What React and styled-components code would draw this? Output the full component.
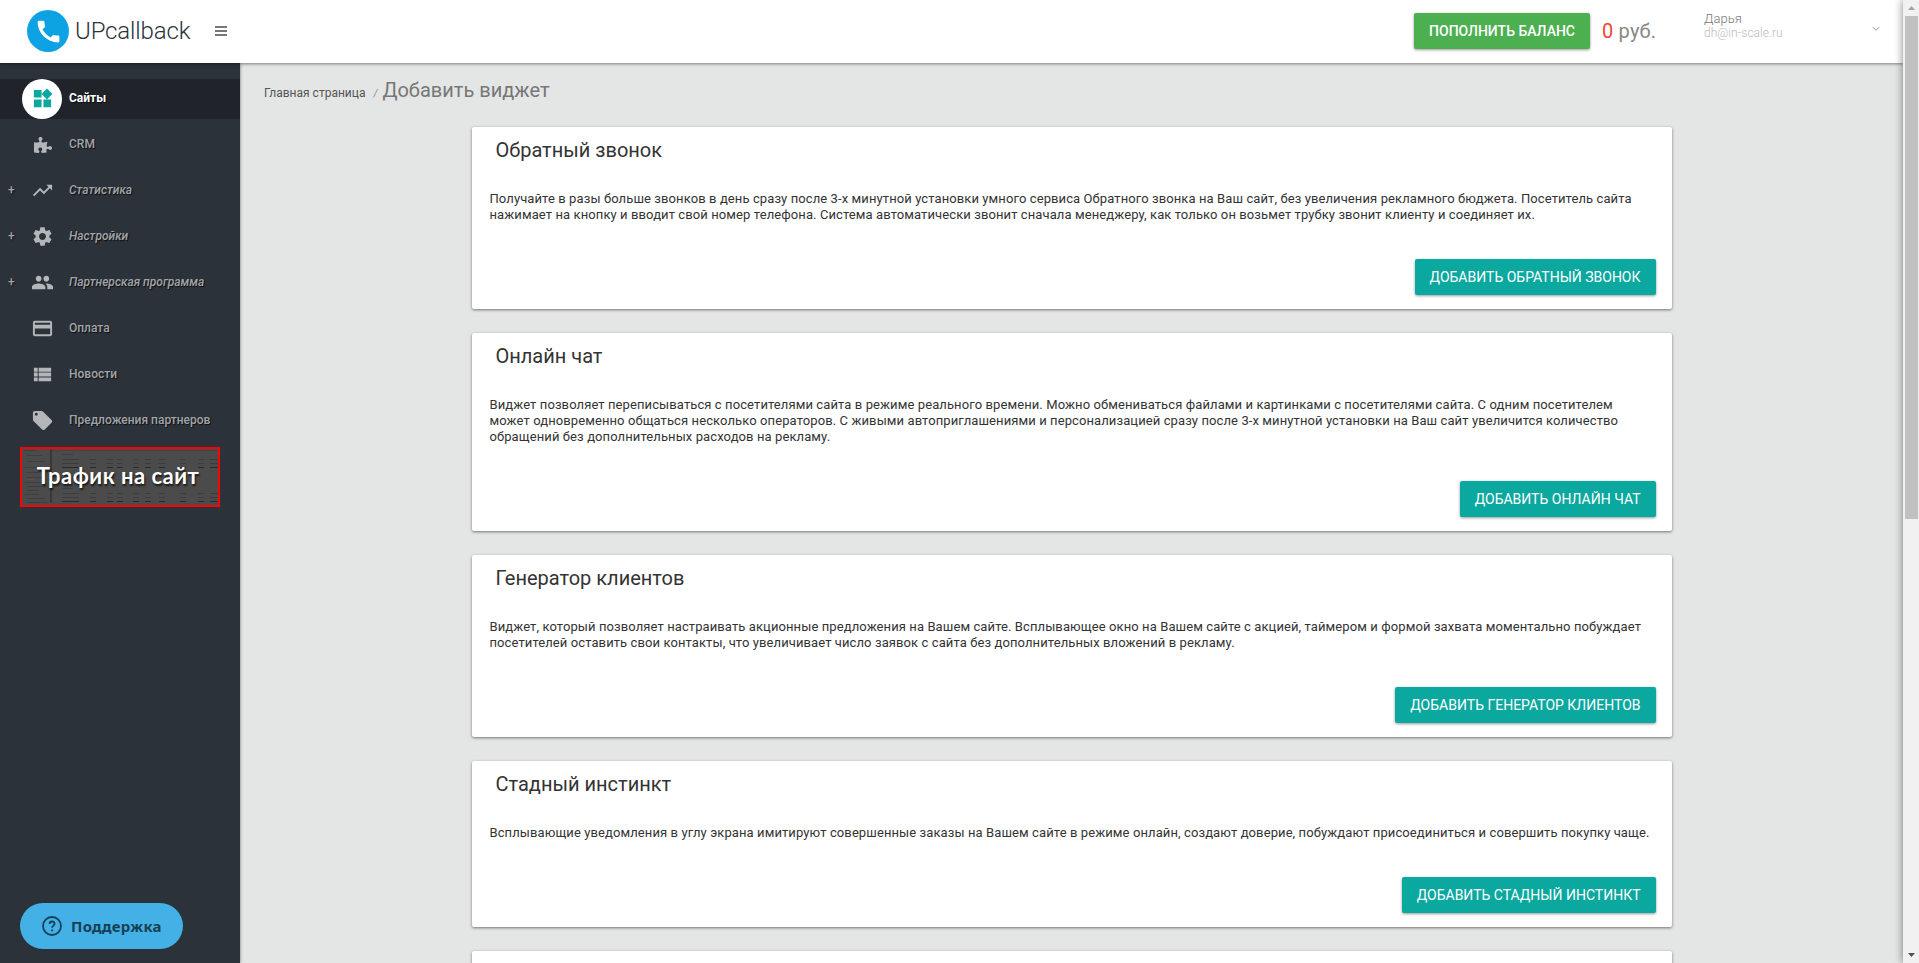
import React from 'react'
import styled, { createGlobalStyle, css } from 'styled-components'
import { FaPuzzlePiece } from 'react-icons/fa'
import {
  MdCall,
  MdLocalOffer,
  MdPayment,
  MdPeople,
  MdSettings,
  MdTrendingUp,
  MdViewList,
  MdWidgets,
} from 'react-icons/md'

const GlobalStyle = createGlobalStyle`
  * {
    box-sizing: border-box;
  }

  body {
    margin: 0;
    overflow: hidden;
    font-family: Roboto, 'Noto Sans', sans-serif;
    font-size: 13px;
    color: #333;
  }
`

const Window = styled.div`
  display: flex;
  height: 100vh;
  overflow: hidden;
  background: #e4e6e5;
`

const Page = styled.div`
  flex: 1;
  min-width: 0;
  display: flex;
  flex-direction: column;
`

const Header = styled.header`
  flex: none;
  z-index: 1;
  display: flex;
  height: 63px;
  padding-left: 27px;
  background: #fff;
  box-shadow: 0 1px 3px rgba(0, 0, 0, 0.45);
`

const Logo = styled.div`
  display: flex;
  align-items: center;
  width: 188px;
  color: #2b323a;
  font-size: 24px;
  font-weight: 330;
  letter-spacing: -0.15px;
  white-space: nowrap;

  span:last-child {
    margin-top: -2px;
  }
`

const LogoMark = styled.span`
  display: flex;
  align-items: center;
  justify-content: center;
  width: 42px;
  height: 42px;
  margin: -1px 6px 0 0;
  border-radius: 50%;
  background: #0da2e4;
  color: #fff;
`

const Burger = styled.div`
  display: flex;
  flex-direction: column;
  gap: 2px;
  margin-top: 26px;

  span {
    width: 12px;
    height: 2px;
    background: #777;
  }
`

const Account = styled.div`
  display: flex;
  margin-left: auto;
  padding-top: 13px;
`

const Button = styled.button`
  height: 36px;
  padding: 0 15px;
  border: 0;
  border-radius: 2px;
  background: ${({ $green }) => ($green ? '#4caf50' : '#0ba8a0')};
  box-shadow: 0 1px 3px rgba(0, 0, 0, 0.4);
  color: #fff;
  font-family: inherit;
  font-size: 14px;
  font-weight: ${({ $green }) => ($green ? 500 : 450)};
  text-transform: uppercase;
  white-space: nowrap;
`

const Balance = styled.div`
  width: 102px;
  margin-left: 12px;
  color: #888;
  font-size: 20px;
  line-height: 36px;
  letter-spacing: 0.2px;

  b {
    color: #f44336;
    font-weight: 400;
  }
`

const User = styled.div`
  width: 168px;
  margin-top: -1px;
  color: #bbb;
  font-size: 12px;
  font-weight: 300;
  line-height: 14px;
  letter-spacing: 0.05px;

  strong {
    display: block;
    color: #777;
    font-size: 13px;
    font-weight: 350;
  }
`

const Chevron = styled.svg`
  width: 8px;
  height: 6px;
  margin: 13px 23px 0 0;
`

const Body = styled.div`
  flex: 1;
  display: flex;
  min-height: 0;
`

const Sidebar = styled.aside`
  flex: none;
  display: flex;
  flex-direction: column;
  width: 240px;
  padding-top: 16px;
  background: #2b323a;
  box-shadow: 0 0 3px rgba(0, 0, 0, 0.5);
`

const Menu = styled.nav`
  display: flex;
  flex-direction: column;
  gap: 6px;
`

const MenuIcon = styled.span`
  display: flex;
  align-items: center;
  justify-content: center;
  width: 40px;
  height: 40px;
  margin-right: 7px;
  padding: 0 0 1px 1px;
  border-radius: 50%;
  font-size: ${({ $size }) => $size || 23}px;
`

const MenuItem = styled.a`
  display: flex;
  align-items: center;
  height: 40px;
  color: #a1a4a7;
  font-size: 12px;
  font-weight: 500;
  font-style: ${({ $nested }) => ($nested ? 'italic' : 'normal')};
  text-shadow: 1px 1px 1px rgba(0, 0, 0, 0.7);
  white-space: nowrap;

  ${MenuIcon} {
    color: #b4b7ba;
  }

  ${({ $active }) =>
    $active &&
    css`
      background: #20242a;
      color: #fff;
      font-weight: 700;

      ${MenuIcon} {
        background: #fff;
        color: #0ba8a0;
      }
    `}
`

const Plus = styled.span`
  width: 22px;
  margin-top: -2px;
  padding-left: 8px;
  font-style: normal;
`

const Label = styled.span`
  margin-top: -2px;
`

const Banner = styled.a`
  position: relative;
  display: flex;
  align-items: center;
  justify-content: center;
  width: 200px;
  height: 60px;
  margin: 6px 0 0 20px;
  border: 2px solid #f00;
  background: #4b4b4b;
  color: #fff;
  font-family: Lato, 'Open Sans', sans-serif;
  font-size: 22px;
  font-weight: 700;
  letter-spacing: 0.5px;
  text-shadow: 1px 2px 2px rgba(0, 0, 0, 0.7);
  white-space: nowrap;

  svg {
    position: absolute;
    inset: 0;
  }

  span {
    position: relative;
    top: -2px;
    left: -2px;
  }
`

const Support = styled.button`
  display: flex;
  align-items: center;
  width: 163px;
  height: 46px;
  margin: auto 0 14px 20px;
  padding: 0 0 0 22px;
  border: 0;
  border-radius: 23px;
  background: #43b1e6;
  color: #173f55;
  font-family: 'Noto Sans', 'Open Sans', sans-serif;
  font-size: 15px;
  font-weight: 700;
  letter-spacing: 0.2px;

  svg {
    margin-right: 9px;
  }
`

const Main = styled.main`
  flex: 1;
  min-width: 0;
  overflow: hidden;
`

const Breadcrumbs = styled.div`
  display: flex;
  align-items: baseline;
  height: 64px;
  padding: 15px 0 0 24px;
  color: #555;
  font-size: 12px;

  i {
    margin: 0 5px 0 8px;
    color: #888;
    font-size: 10px;
  }

  h1 {
    margin: 0;
    color: #777;
    font-size: 20px;
    font-weight: 400;
  }
`

const Cards = styled.div`
  display: flex;
  flex-direction: column;
  gap: 24px;
  width: 1200px;
  margin: 0 auto;
`

const Card = styled.section`
  display: flex;
  flex-direction: column;
  align-items: flex-end;
  padding: 11px 16px 14px 18px;
  border-radius: 2px;
  background: #fff;
  box-shadow: 0 1px 3px rgba(0, 0, 0, 0.5);
`

const CardTitle = styled.h2`
  align-self: stretch;
  margin: 0 0 29px 6px;
  color: #333;
  font-size: 20px;
  font-weight: 400;
  line-height: 24px;
`

const CardText = styled.p`
  align-self: stretch;
  min-height: 16px;
  margin: 0 2px 36px 0;
  font-size: 13px;
  line-height: 16px;
  letter-spacing: 0.1px;
`

const ScrollBar = styled.div`
  flex: none;
  z-index: 2;
  display: flex;
  flex-direction: column;
  width: 16px;
  padding: 6px 1px 6px 2px;
  background: #f1f1f1;
  box-shadow: 0 0 8px rgba(0, 0, 0, 0.5);

  svg {
    display: block;
    margin: 0 auto;
  }
`

const Thumb = styled.div`
  height: 503px;
  margin: 6px 0 auto;
  background: #c1c1c1;
`

const menu = [
  { label: 'Сайты', icon: MdWidgets, active: true },
  { label: 'CRM', icon: FaPuzzlePiece, size: 18 },
  { label: 'Статистика', icon: MdTrendingUp, nested: true },
  { label: 'Настройки', icon: MdSettings, nested: true },
  { label: 'Партнерская программа', icon: MdPeople, nested: true },
  { label: 'Оплата', icon: MdPayment },
  { label: 'Новости', icon: MdViewList },
  { label: 'Предложения партнеров', icon: MdLocalOffer },
]

const widgets = [
  {
    title: 'Обратный звонок',
    text: 'Получайте в разы больше звонков в день сразу после 3-х минутной установки умного сервиса Обратного звонка на Ваш сайт, без увеличения рекламного бюджета. Посетитель сайта нажимает на кнопку и вводит свой номер телефона. Система автоматически звонит сначала менеджеру, как только он возьмет трубку звонит клиенту и соединяет их.',
    action: 'Добавить обратный звонок',
  },
  {
    title: 'Онлайн чат',
    text: 'Виджет позволяет переписываться с посетителями сайта в режиме реального времени. Можно обмениваться файлами и картинками с посетителями сайта. С одним посетителем может одновременно общаться несколько операторов. С живыми автоприглашениями и персонализацией сразу после 3-х минутной установки на Ваш сайт увеличится количество обращений без дополнительных расходов на рекламу.',
    action: 'Добавить онлайн чат',
  },
  {
    title: 'Генератор клиентов',
    text: 'Виджет, который позволяет настраивать акционные предложения на Вашем сайте. Всплывающее окно на Вашем сайте с акцией, таймером и формой захвата моментально побуждает посетителей оставить свои контакты, что увеличивает число заявок с сайта без дополнительных вложений в рекламу.',
    action: 'Добавить генератор клиентов',
  },
  {
    title: 'Стадный инстинкт',
    text: 'Всплывающие уведомления в углу экрана имитируют совершенные заказы на Вашем сайте в режиме онлайн, создают доверие, побуждают присоединиться и совершить покупку чаще.',
    action: 'Добавить стадный инстинкт',
  },
]

const tableRows = [10, 14, 18, 44, 48, 52]
const tableColumns = [68, 85, 95, 111, 123, 137, 158, 176, 188]

const BannerTable = () => (
  <svg width="196" height="56">
    <rect x="28" width="2" height="54" fill="#383838" />
    <rect x="30" y="1" width="166" height="1" fill="#444" />
    {[1, 6, 12, 18, 23, 28, 33, 37, 41, 45, 49, 53].map((y, i) => (
      <rect key={y} x={i % 3 ? 5 : 2} y={y} width={12 + (i % 4) * 3} height="1" fill="#3f3f3f" />
    ))}
    <rect x="6" y="30" width="6" height="1" fill="#7a4630" />
    {[5, 39].map(y => (
      <rect key={y} x="40" y={y} width="11" height="1" fill="#2f4250" />
    ))}
    {tableRows.map((y, i) => (
      <g key={y} fill={i % 3 === 2 ? '#2a2a2a' : '#3c3c3c'}>
        <rect x="40" y={y} width="17" height="1" />
        {tableColumns.map(x => (
          <rect key={x} x={x} y={y} width={x > 180 ? 8 : 6} height="1" />
        ))}
      </g>
    ))}
  </svg>
)

const HelpIcon = () => (
  <svg width="20" height="20" viewBox="0 0 20 20" fill="none" stroke="currentColor" strokeWidth="1.8">
    <circle cx="10" cy="10" r="9" />
    <path d="M7.6 8c0-3.4 5-3.2 5-.3 0 1.9-2.5 2-2.5 4" />
    <path d="M10.1 13.4v1.9" />
  </svg>
)

const TopBar = () => (
  <Header>
    <Logo>
      <LogoMark>
        <MdCall size={29} />
      </LogoMark>
      <span>UPcallback</span>
    </Logo>
    <Burger>
      <span />
      <span />
      <span />
    </Burger>
    <Account>
      <Button $green>Пополнить баланс</Button>
      <Balance>
        <b>0</b> руб.
      </Balance>
      <User>
        <strong>Дарья</strong>
        dh@in-scale.ru
      </User>
      <Chevron viewBox="0 0 8 6" fill="none" stroke="#999">
        <path d="M0.7 1l3.3 3.3L7.3 1" />
      </Chevron>
    </Account>
  </Header>
)

const SideMenu = () => (
  <Sidebar>
    <Menu>
      {menu.map(({ label, icon: Icon, size, active, nested }) => (
        <MenuItem key={label} $active={active} $nested={nested}>
          <Plus>{nested && '+'}</Plus>
          <MenuIcon $size={size}>
            <Icon />
          </MenuIcon>
          <Label>{label}</Label>
        </MenuItem>
      ))}
    </Menu>
    <Banner>
      <BannerTable />
      <span>Трафик на сайт</span>
    </Banner>
    <Support>
      <HelpIcon />
      Поддержка
    </Support>
  </Sidebar>
)

const App = () => (
  <Window>
    <GlobalStyle />
    <Page>
      <TopBar />
      <Body>
        <SideMenu />
        <Main>
          <Breadcrumbs>
            Главная страница<i>/</i>
            <h1>Добавить виджет</h1>
          </Breadcrumbs>
          <Cards>
            {widgets.map(({ title, text, action }) => (
              <Card key={title}>
                <CardTitle>{title}</CardTitle>
                <CardText>{text}</CardText>
                <Button>{action}</Button>
              </Card>
            ))}
            <Card />
          </Cards>
        </Main>
      </Body>
    </Page>
    <ScrollBar>
      <svg width="7" height="4">
        <path d="M0 4L3.5 0 7 4z" fill="#a3a3a3" />
      </svg>
      <Thumb />
      <svg width="7" height="4">
        <path d="M0 0L3.5 4 7 0z" fill="#505050" />
      </svg>
    </ScrollBar>
  </Window>
)

export default App
